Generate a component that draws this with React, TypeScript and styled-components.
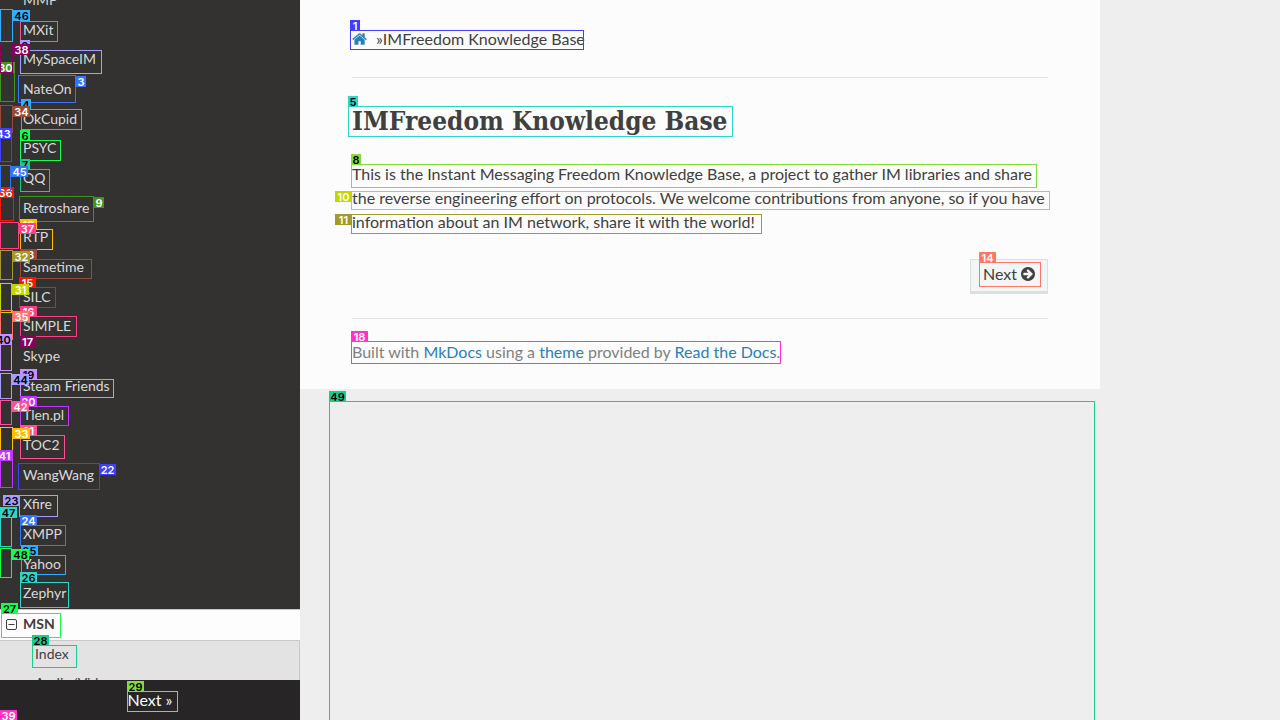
import React from "react";
import styled, { createGlobalStyle } from "styled-components";

const GlobalStyle = createGlobalStyle`
  * { box-sizing: border-box; }
  body {
    margin: 0;
    background: #eeeeee;
    color: #404040;
    font-family: Lato, "Liberation Sans", sans-serif;
    font-size: 16px;
    line-height: 24px;
    overflow: hidden;
  }
`;

const Layout = styled.div`
  position: relative;
  display: flex;
  height: 100vh;
  overflow: hidden;
`;

const Sidebar = styled.aside`
  flex: 0 0 300px;
  display: flex;
  flex-direction: column;
  background: #343131;
`;

const Menu = styled.nav`
  flex: 1;
  min-height: 0;
  display: flex;
  flex-direction: column;
  overflow: hidden;
`;

const ProtocolList = styled.ul`
  flex: 1;
  display: flex;
  flex-direction: column;
  list-style: none;
  margin: -15px 0 0;
  padding: 0 0 1px;
`;

const ProtocolItem = styled.li`
  flex: 1;
  display: flex;
  align-items: center;
`;

const MenuLink = styled.a<{ $tone?: "dark" | "sub" }>`
  display: block;
  padding-left: ${(p) => (p.$tone === "sub" ? 35 : 23)}px;
  color: ${(p) => (p.$tone === "sub" ? "#404040" : "#d9d9d9")};
  font-size: 14px;
  line-height: 18px;
  text-decoration: none;
`;

const CurrentRow = styled.a`
  flex: 0 0 31px;
  display: flex;
  align-items: center;
  gap: 6px;
  padding: 0 0 2px 6px;
  border-top: 1px solid #c9c9c9;
  background: #fdfdfd;
  color: #404040;
  font-size: 14px;
  font-weight: 700;
  line-height: 18px;
  text-decoration: none;
`;

const SubMenu = styled.div`
  flex: 0 0 40px;
  display: flex;
  flex-direction: column;
  gap: 11px;
  padding-top: 4px;
  border-top: 1px solid #c9c9c9;
  border-right: 1px solid #c9c9c9;
  background: #e3e3e3;
  overflow: hidden;
`;

const VersionBar = styled.div`
  flex: 0 0 40px;
  display: flex;
  align-items: center;
  justify-content: center;
  background: #272525;
`;

const VersionLink = styled.a`
  color: #fcfcfc;
  text-decoration: none;
`;

const Content = styled.main`
  flex: 1;
  min-width: 0;
`;

const Page = styled.div`
  max-width: 800px;
  padding: 27px 52px 25px;
  background: #fcfcfc;
`;

const Breadcrumbs = styled.nav`
  display: flex;
  align-items: center;
`;

const HomeLink = styled.a`
  display: flex;
  margin-right: 9px;
  color: #2980b9;
`;

const Rule = styled.hr<{ $footer?: boolean }>`
  height: 1px;
  margin: ${(p) => (p.$footer ? "24px 0 21px" : "26px 0 24px")};
  border: 0;
  background: #e1e4e5;
`;

const Title = styled.h1`
  margin: 0 0 22px;
  font-family: "Roboto Slab", "DejaVu Serif Condensed", "DejaVu Serif", serif;
  font-size: 26px;
  font-weight: 700;
  line-height: 38px;
`;

const Paragraph = styled.p`
  margin: 0 0 25px;
`;

const PageNav = styled.div`
  display: flex;
  justify-content: flex-end;
`;

const NextLink = styled.a`
  display: flex;
  align-items: center;
  gap: 4px;
  height: 35px;
  padding: 0 12px 5px;
  border: 1px solid #dcdfdf;
  box-shadow: inset 0 -2px 0 #dcdfdf;
  background: #f3f6f6;
  color: #404040;
  text-decoration: none;
`;

const Credits = styled.footer`
  height: 24px;
  color: #808080;
  a { color: #2980b9; text-decoration: none; }
`;

const Overlay = styled.div`
  position: absolute;
  inset: 0;
  overflow: hidden;
  pointer-events: none;
`;

const Outline = styled.div`
  position: absolute;
  border: 1px solid;
`;

const Tag = styled.span<{ $ink: string; $wide: boolean }>`
  position: absolute;
  width: ${(p) => (p.$wide ? 17 : 10)}px;
  height: 11px;
  color: ${(p) => p.$ink};
  font-family: Inter, sans-serif;
  font-size: 11px;
  font-weight: 600;
  line-height: 12px;
  text-align: center;
`;

const protocols = [
  "MMP", "MXit", "MySpaceIM", "NateOn", "OkCupid", "PSYC", "QQ", "Retroshare",
  "RTP", "Sametime", "SILC", "SIMPLE", "Skype", "Steam Friends", "Tlen.pl",
  "TOC2", "WangWang", "Xfire", "XMPP", "Yahoo", "Zephyr",
];

const palette = {
  pink: "#ff4f95", lilac: "#a59dff", blue: "#3374ff", sky: "#33aeff",
  teal: "#2fd4cb", lime: "#14ff4b", jade: "#1acb90", leaf: "#86dc3c",
  green: "#3f941a", yellow: "#c3d600", olive: "#a39a2a", amber: "#ffbf00",
  brown: "#9a4a35", coral: "#ff7566", red: "#f51800", rose: "#ff3d86",
  plum: "#87005c", magenta: "#ff33cc", lavender: "#c78fff", violet: "#c534ff",
  indigo: "#3f3fff",
};

const darkInk = new Set(["lilac", "sky", "teal", "lime", "jade", "leaf", "lavender"]);

// number, colour, box x, y, width, height, tag x, y
type Mark = [number, keyof typeof palette, number, number, number, number, number, number];

const marks: Mark[] = [
  [0, "pink", 20, 21, 38, 21, 20, 11],
  [1, "indigo", 350, 30, 234, 20, 350, 20],
  [2, "lilac", 20, 50, 82, 24, 20, 40],
  [3, "blue", 18, 75, 58, 28, 76, 76],
  [4, "sky", 21, 109, 61, 21, 21, 99],
  [5, "teal", 348, 106, 385, 31, 348, 96],
  [6, "lime", 20, 140, 41, 21, 20, 130],
  [7, "jade", 20, 169, 30, 23, 20, 159],
  [8, "leaf", 351, 164, 686, 24, 351, 154],
  [9, "green", 19, 196, 75, 26, 94, 197],
  [10, "yellow", 351, 191, 699, 19, 335, 191],
  [11, "olive", 351, 214, 411, 20, 335, 214],
  [12, "amber", 20, 229, 33, 21, 20, 219],
  [13, "brown", 20, 259, 72, 20, 20, 249],
  [14, "coral", 979, 262, 62, 25, 979, 252],
  [15, "red", 19, 287, 37, 21, 19, 277],
  [16, "rose", 20, 316, 57, 21, 20, 306],
  [17, "plum", 19, 345, 47, 25, 19, 336],
  [18, "magenta", 351, 341, 430, 23, 351, 331],
  [19, "lavender", 20, 379, 94, 19, 20, 369],
  [20, "violet", 20, 406, 49, 20, 20, 396],
  [21, "pink", 20, 435, 45, 24, 20, 425],
  [22, "indigo", 18, 463, 82, 27, 99, 464],
  [23, "lilac", 19, 495, 39, 22, 3, 495],
  [24, "blue", 20, 525, 46, 21, 20, 515],
  [25, "sky", 21, 555, 45, 20, 21, 545],
  [26, "teal", 20, 582, 49, 26, 20, 572],
  [27, "lime", 1, 613, 60, 25, 1, 603],
  [28, "jade", 32, 645, 45, 23, 32, 635],
  [29, "leaf", 127, 691, 51, 21, 127, 681],
  [30, "green", 0, 62, 15, 40, -3, 62],
  [31, "yellow", 0, 283, 12, 30, 12, 284],
  [32, "olive", 0, 250, 13, 30, 13, 251],
  [33, "amber", 0, 427, 13, 34, 13, 428],
  [34, "brown", 0, 105, 13, 28, 13, 106],
  [35, "coral", 0, 310, 13, 30, 13, 311],
  [36, "red", 0, 196, 14, 25, -3, 187],
  [37, "rose", 0, 222, 19, 27, 19, 223],
  [38, "plum", 0, 43, 13, 30, 13, 44],
  [39, "magenta", 0, 720, 13, 30, 0, 710],
  [40, "lavender", 0, 344, 12, 27, -5, 334],
  [41, "violet", 0, 460, 13, 28, -4, 450],
  [42, "pink", 0, 400, 12, 25, 12, 401],
  [43, "indigo", 0, 137, 12, 25, -5, 128],
  [44, "lilac", 0, 373, 12, 26, 12, 374],
  [45, "blue", 0, 165, 11, 27, 11, 166],
  [46, "sky", 0, 9, 13, 33, 13, 10],
  [47, "teal", 0, 517, 12, 30, 0, 507],
  [48, "lime", 0, 548, 12, 30, 12, 549],
  [49, "jade", 329, 401, 766, 330, 329, 391],
];

const HomeIcon = () => (
  <svg width="15" height="16" viewBox="48 0 1680 1792" fill="currentColor" aria-hidden="true">
    <path d="M1472 992v480q0 26-19 45t-45 19h-384v-384h-256v384h-384q-26 0-45-19t-19-45v-480q0-1 .5-3t.5-3l575-474 575 474q1 2 1 6zm223-69l-62 74q-8 9-21 11h-3q-13 0-21-7l-692-577-692 577q-12 8-24 7-13-2-21-11l-62-74q-8-10-7-23.5t11-21.5l719-599q32-26 76-26t76 26l244 204v-195q0-14 9-23t23-9h192q14 0 23 9t9 23v408l219 182q10 8 11 21.5t-7 23.5z" />
  </svg>
);

const ArrowIcon = () => (
  <svg width="14" height="14" viewBox="128 128 1536 1536" fill="currentColor" aria-hidden="true">
    <path d="M1413 896q0-27-18-45l-91-91-362-362q-18-18-45-18t-45 18l-91 91q-18 18-18 45t18 45l189 189h-502q-26 0-45 19t-19 45v128q0 26 19 45t45 19h502l-189 189q-18 18-18 45t18 45l91 91q18 18 45 18t45-18l362-362 91-91q18-18 18-45zm251 0q0 209-103 385.5t-279.5 279.5-385.5 103-385.5-103-279.5-279.5-103-385.5 103-385.5 279.5-279.5 385.5-103 385.5 103 279.5 279.5 103 385.5z" />
  </svg>
);

const CollapseIcon = () => (
  <svg width="11" height="11" viewBox="0 0 11 11" fill="none" stroke="currentColor" aria-hidden="true">
    <rect x="0.5" y="0.5" width="10" height="10" rx="1.5" />
    <path d="M2.5 5.5h6" />
  </svg>
);

export default function App() {
  return (
    <Layout>
      <GlobalStyle />
      <Sidebar>
        <Menu aria-label="Protocols">
          <ProtocolList>
            {protocols.map((name) => (
              <ProtocolItem key={name}>
                <MenuLink href="#">{name}</MenuLink>
              </ProtocolItem>
            ))}
          </ProtocolList>
          <CurrentRow href="#"><CollapseIcon />MSN</CurrentRow>
          <SubMenu>
            <MenuLink href="#" $tone="sub">Index</MenuLink>
            <MenuLink href="#" $tone="sub">Audio/Video</MenuLink>
          </SubMenu>
        </Menu>
        <VersionBar><VersionLink href="#">Next »</VersionLink></VersionBar>
      </Sidebar>
      <Content>
        <Page>
          <Breadcrumbs aria-label="Breadcrumb">
            <HomeLink href="#" aria-label="Home"><HomeIcon /></HomeLink>
            <span>»IMFreedom Knowledge Base</span>
          </Breadcrumbs>
          <Rule />
          <Title>IMFreedom Knowledge Base</Title>
          <Paragraph>
            This is the Instant Messaging Freedom Knowledge Base, a project to gather IM libraries
            and share the reverse engineering effort on protocols. We welcome contributions from
            anyone, so if you have information about an IM network, share it with the world!
          </Paragraph>
          <PageNav><NextLink href="#">Next <ArrowIcon /></NextLink></PageNav>
          <Rule $footer />
          <Credits>
            Built with <a href="#">MkDocs</a> using a <a href="#">theme</a> provided by{" "}
            <a href="#">Read the Docs</a>.
          </Credits>
        </Page>
      </Content>
      <Overlay>
        {marks.map(([id, tone, x, y, width, height, tagX, tagY]) => (
          <React.Fragment key={id}>
            <Outline style={{ left: x, top: y, width, height, borderColor: palette[tone] }} />
            <Tag
              $wide={id > 9}
              $ink={darkInk.has(tone) ? "#000000" : "#ffffff"}
              style={{ left: tagX, top: tagY, background: palette[tone] }}
            >
              {id}
            </Tag>
          </React.Fragment>
        ))}
      </Overlay>
    </Layout>
  );
}
